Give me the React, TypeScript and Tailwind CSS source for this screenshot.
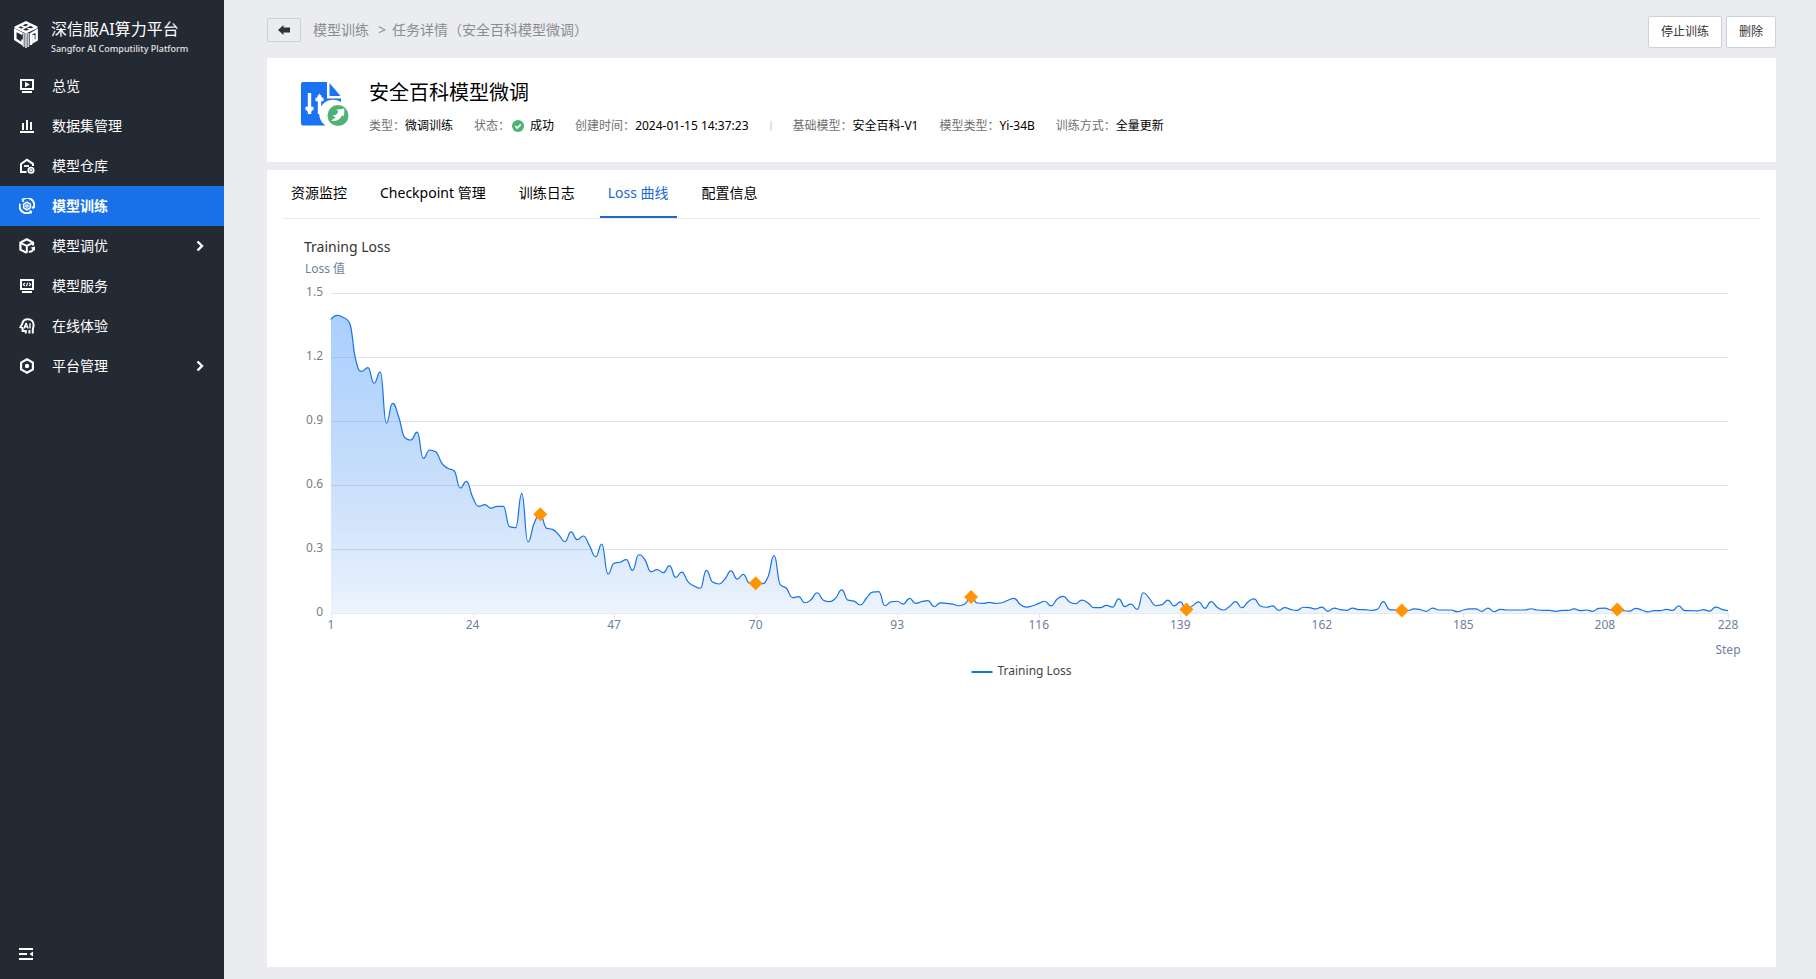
import { useLayoutEffect, useRef, useState, type ReactNode } from "react";

/* ---------- Sidebar icons (16 × 16 grid) ---------- */

function Icon({ children }: { children: ReactNode }) {
  return (
    <svg viewBox="0 0 16 16" className="h-4 w-4 shrink-0" fill="none" stroke="currentColor" strokeWidth="2" aria-hidden="true">
      {children}
    </svg>
  );
}

const OverviewIcon = () => (
  <Icon>
    <path d="M2 2h12v9H2z" />
    <path d="M6 3.8v5.4l4.8-2.7z" fill="currentColor" stroke="none" />
    <path d="M3 14h10" />
  </Icon>
);

const DatasetIcon = () => (
  <Icon>
    <path d="M1 14h14M4 5v7M8 2v10M12 4v8" />
  </Icon>
);

const WarehouseIcon = () => (
  <Icon>
    <path d="M7.5 14H2V6l6-4.2 6 4v2.2" />
    <path d="M5 8h5" strokeWidth="1.8" />
    <circle cx="12" cy="12.2" r="2.8" strokeWidth="1.5" />
    <path d="M12 10.2v4M10.2 11.2l3.6 2M13.8 11.2l-3.6 2" strokeWidth="1" />
  </Icon>
);

const TrainingIcon = () => (
  <Icon>
    <path d="M3.2 2.2A7 7 0 0 1 14.8 9.5M1 5.8A7 7 0 0 0 12 13.6" strokeWidth="2" />
    <path d="M12.2 8.4h3.8l-1.8 3.2zM10 12l3.2 1-.8 3.2z" fill="currentColor" stroke="none" />
    <path d="M8 4.2l3.3 1.9v3.8L8 11.800 4.700 9.900V6.100z" strokeWidth="1.6" />
    <circle cx="8" cy="8" r="1.2" strokeWidth="1.2" />
    <path d="M2.6 3.6l2.6.4-1-3z" fill="currentColor" stroke="none" />
  </Icon>
);

const TuningIcon = () => (
  <Icon>
    <path d="M14 7.5V4.600L7.800 1.300 1.400 4.600v7l6.300 3.300" strokeWidth="2.2" />
    <path d="M1.4 4.8l6.4 3 6-3M7.800 7.800v7" strokeWidth="2" />
    <path d="M9.8 13.8c2.6.2 4.4-1.2 4.8-3.4" strokeWidth="2" />
    <path d="M11.400 9.800l4.600-1.400-.2 4.400z" fill="currentColor" stroke="none" />
  </Icon>
);

const ServiceIcon = () => (
  <Icon>
    <path d="M2 2h12v9H2zM3 14h10" />
    <path d="M5.900 4.800L4.300 6.400l1.600 1.600M10.100 4.800l1.600 1.600-1.600 1.600M8.600 4.700l-1.200 3.500" strokeWidth="1.1" />
  </Icon>
);

const ExperienceIcon = () => (
  <Icon>
    <path d="M6.800 15.500V13H3.600v-2.800L1.400 9l1.800-3C3.600 3 5.800 1.200 8.800 1.200c3.400 0 5.800 2.400 5.800 5.800 0 2.400-.8 3-.8 5v3.500M10.400 15.500V12" strokeWidth="2" />
    <path d="M5 10.400l1.900-5h.4l1.900 5M5.700 8.800h2.900M11 5.200v5.200" strokeWidth="1.400" />
  </Icon>
);

const PlatformIcon = () => (
  <Icon>
    <path d="M8 1.300l5.900 3.300v6.800L8 14.700l-5.900-3.300V4.600z" strokeWidth="2.200" />
    <circle cx="8" cy="8" r="2.200" fill="currentColor" stroke="none" />
  </Icon>
);

const ChevronIcon = () => (
  <svg viewBox="0 0 8 12" className="h-3 w-2" fill="none" stroke="currentColor" strokeWidth="2.400" aria-hidden="true">
    <path d="M1.500 1.500L6 6l-4.500 4.500" />
  </svg>
);

function Logo() {
  return (
    <svg viewBox="0 0 24 27" className="h-[27px] w-6 shrink-0" fill="none" stroke="#fff" aria-hidden="true">
      <path d="M12 1.300L22.400 6.300 12 11.200 1.600 6.300z" strokeWidth="2.400" strokeLinejoin="round" />
      <path d="M7 4.500l4 1.800M13 6.500l4 1.800M8 7.900l7.600-3.600" strokeWidth="1.900" />
      <path d="M8.500 12.800L1.300 9.200v9.200l7.200 4.600v-4.500" strokeWidth="2.500" />
      <path d="M12 12v15M9.700 12v14M14.300 12v14" stroke="#c6c9cd" strokeWidth="1.900" />
      <path d="M17 24V13l5.700-3.300v9L19.500 20.600v-6.500" strokeWidth="2.400" />
    </svg>
  );
}

function TaskIcon() {
  return (
    <svg viewBox="0 0 48 44" className="h-11 w-12 shrink-0" aria-hidden="true">
      <path d="M2 0h24v16.500h14V20a13.800 13.800 0 0 0-15.500 23.500H2a2 2 0 0 1-2-2V2a2 2 0 0 1 2-2z" fill="#1a73f2" />
      <path d="M28.500 1L39.500 14H28.500z" fill="#1a73f2" />
      <g stroke="#fff" strokeWidth="3.4">
        <path d="M8.500 11v21M18.500 13v19" />
        <path d="M4.500 26.500h8M14.500 17.500h8" />
      </g>
      <path d="M4.500 26l4 6.500 4-6.500zM14.500 18l4-6.500 4 6.500z" fill="#fff" />
      <circle cx="37" cy="33.500" r="10.500" fill="#4fb173" />
      <path d="M30 38.500c5.500 1.500 9.500-1 10.800-5.200l2.200.9.400-7.700-8 1.300 1.900 1.800c-1 2.800-2.700 4-5.800 3.900l3 2.300z" fill="#fff" />
    </svg>
  );
}

/* ---------- Sidebar ---------- */

const NAV = [
  { label: "总览", icon: <OverviewIcon /> },
  { label: "数据集管理", icon: <DatasetIcon /> },
  { label: "模型仓库", icon: <WarehouseIcon /> },
  { label: "模型训练", icon: <TrainingIcon />, active: true },
  { label: "模型调优", icon: <TuningIcon />, expandable: true },
  { label: "模型服务", icon: <ServiceIcon /> },
  { label: "在线体验", icon: <ExperienceIcon /> },
  { label: "平台管理", icon: <PlatformIcon />, expandable: true },
];

function Sidebar() {
  return (
    <aside className="flex w-56 shrink-0 flex-col bg-[#242a34] text-white">
      <div className="flex h-[66px] items-start gap-[13px] pt-[17px] pl-[14px]">
        <div className="pt-1">
          <Logo />
        </div>
        <div>
          <div className="text-base leading-6 whitespace-nowrap">深信服AI算力平台</div>
          <div className="text-[9px] leading-4 font-medium whitespace-nowrap text-[#e3e4e6]">Sangfor AI Computility Platform</div>
        </div>
      </div>
      <nav>
        {NAV.map((item) => (
          <a
            key={item.label}
            href="#"
            aria-current={item.active ? "page" : undefined}
            className={`flex h-10 items-center pr-5 pl-[19px] text-sm ${item.active ? "bg-[#1871e8] font-bold" : ""}`}
          >
            {item.icon}
            <span className="ml-[17px] flex-1">{item.label}</span>
            {item.expandable && <ChevronIcon />}
          </a>
        ))}
      </nav>
      <button type="button" aria-label="收起菜单" className="mt-auto mb-4 ml-[18px] w-fit">
        <svg viewBox="0 0 16 16" className="h-4 w-4" fill="none" stroke="currentColor" strokeWidth="2" aria-hidden="true">
          <path d="M1 2h14M1 7h8M1 12h14" />
          <path d="M15 4.500v5L11.500 7z" fill="currentColor" stroke="none" />
        </svg>
      </button>
    </aside>
  );
}

/* ---------- Loss chart ---------- */

const LOSS = [
  1.378, 1.395, 1.385, 1.36, 1.19, 1.133, 1.15, 1.077, 1.13, 0.89, 0.983, 0.92, 0.823, 0.811, 0.848, 0.725, 0.764, 0.756,
  0.703, 0.678, 0.667, 0.586, 0.617, 0.544, 0.5, 0.508, 0.492, 0.5, 0.5, 0.405, 0.4, 0.56, 0.333, 0.42, 0.4625, 0.398,
  0.392, 0.367, 0.334, 0.38, 0.344, 0.361, 0.316, 0.264, 0.323, 0.183, 0.233, 0.238, 0.25, 0.2, 0.273, 0.25, 0.194, 0.203,
  0.189, 0.222, 0.167, 0.192, 0.147, 0.127, 0.116, 0.2, 0.145, 0.136, 0.159, 0.197, 0.159, 0.181, 0.14, 0.139, 0.138, 0.169,
  0.269, 0.133, 0.116, 0.072, 0.077, 0.048, 0.0625, 0.095, 0.06, 0.053, 0.07, 0.108, 0.06, 0.056, 0.0375, 0.069, 0.098, 0.1,
  0.034, 0.052, 0.055, 0.042, 0.069, 0.045, 0.053, 0.058, 0.03, 0.047, 0.045, 0.042, 0.034, 0.042, 0.075, 0.047, 0.045, 0.05,
  0.045, 0.048, 0.06, 0.069, 0.04, 0.028, 0.034, 0.045, 0.055, 0.033, 0.066, 0.078, 0.052, 0.044, 0.06, 0.047, 0.025, 0.025,
  0.036, 0.028, 0.066, 0.03, 0.042, 0.017, 0.095, 0.067, 0.034, 0.039, 0.06, 0.033, 0.052, 0.016, 0.034, 0.052, 0.022, 0.053,
  0.027, 0.014, 0.031, 0.053, 0.025, 0.052, 0.066, 0.033, 0.027, 0.033, 0.0125, 0.025, 0.016, 0.0125, 0.027, 0.025, 0.019,
  0.028, 0.008, 0.023, 0.016, 0.0125, 0.023, 0.016, 0.016, 0.0125, 0.017, 0.053, 0.016, 0.014, 0.012, 0.012, 0.019, 0.016,
  0.008, 0.023, 0.014, 0.014, 0.014, 0.006, 0.014, 0.019, 0.019, 0.008, 0.023, 0.006, 0.017, 0.014, 0.014, 0.014, 0.014,
  0.02, 0.014, 0.012, 0.012, 0.008, 0.012, 0.012, 0.019, 0.011, 0.014, 0.008, 0.022, 0.023, 0.014, 0.016, 0.011, 0.009,
  0.022, 0.014, 0.005, 0.011, 0.011, 0.017, 0.012, 0.033, 0.011, 0.011, 0.01, 0.016, 0.009, 0.028, 0.017, 0.011,
];
const CHECKPOINTS = [35, 70, 105, 140, 175, 210];
const X_TICKS = [1, 24, 47, 70, 93, 116, 139, 162, 185, 208, 228];
const Y_TICKS = [0, 0.3, 0.6, 0.9, 1.2, 1.5];
const PLOT = { left: 48, right: 32, top: 74, height: 320 };

type Point = { x: number; y: number };

/** Bézier curve through the points; handles stay inside the range of neighbouring values. */
function smoothPath(pts: Point[], smooth = 0.5): string {
  const clamp = (v: number, a: number, b: number) => Math.max(Math.min(a, b), Math.min(Math.max(a, b), v));
  let d = `M${pts[0].x} ${pts[0].y}`;
  let out: Point = pts[0];
  for (let i = 1; i < pts.length; i++) {
    const prev = pts[i - 1];
    const cur = pts[i];
    const next = pts[i + 1];
    let inn: Point = cur;
    let nextOut: Point = cur;
    if (next) {
      const slope = (next.y - prev.y) / (next.x - prev.x);
      const half = (next.x - cur.x) * smooth;
      let outY = clamp(cur.y + slope * half, cur.y, next.y);
      const inY = clamp(cur.y - (outY - cur.y), cur.y, prev.y);
      outY = cur.y - (inY - cur.y);
      inn = { x: cur.x - half, y: inY };
      nextOut = { x: cur.x + half, y: outY };
    }
    d += `C${out.x.toFixed(2)} ${out.y.toFixed(2)} ${inn.x.toFixed(2)} ${inn.y.toFixed(2)} ${cur.x.toFixed(2)} ${cur.y.toFixed(2)}`;
    out = nextOut;
  }
  return d;
}

function LossChart() {
  const box = useRef<HTMLDivElement>(null);
  const [width, setWidth] = useState(1200);

  useLayoutEffect(() => {
    const el = box.current;
    if (!el) return;
    const measure = () => setWidth(el.clientWidth);
    measure();
    const observer = new ResizeObserver(measure);
    observer.observe(el);
    return () => observer.disconnect();
  }, []);

  const right = width - PLOT.right;
  const bottom = PLOT.top + PLOT.height;
  const x = (step: number) => PLOT.left + ((step - 1) / (LOSS.length - 1)) * (right - PLOT.left);
  const y = (loss: number) => bottom - (loss / 1.5) * PLOT.height;
  const line = smoothPath(LOSS.map((v, i) => ({ x: x(i + 1), y: y(v) })));
  const crisp = (v: number) => Math.round(v) + 0.5;

  return (
    <div ref={box} className="w-full overflow-hidden">
      <svg width={width} height={480} className="block text-xs" role="img" aria-label="Training Loss">
        <defs>
          <linearGradient id="loss-fill" gradientUnits="userSpaceOnUse" x1="0" y1={y(1.4)} x2="0" y2={bottom}>
            <stop offset="0" stopColor="#57a2ff" stopOpacity="0.5" />
            <stop offset="1" stopColor="#1871e8" stopOpacity="0.08" />
          </linearGradient>
        </defs>
        <text x="21" y="33" className="fill-[#333] text-sm">Training Loss</text>
        <text x="42" y="54" textAnchor="middle" className="fill-[#6e7f9f]">Loss 值</text>
        {Y_TICKS.map((t) => (
          <g key={t}>
            <line x1={PLOT.left} x2={right} y1={crisp(y(t))} y2={crisp(y(t))} stroke={t === 0 ? "#e8eaee" : "#e0e3ec"} />
            <text x={PLOT.left - 8} y={y(t) + 3} textAnchor="end" className="fill-[#7a7d84]">{t}</text>
          </g>
        ))}
        {X_TICKS.map((t) => (
          <g key={t}>
            <line x1={crisp(x(t))} x2={crisp(x(t))} y1={bottom} y2={bottom + 5} stroke="#e4e6ea" />
            <text x={x(t)} y={bottom + 16} textAnchor="middle" className="fill-[#6e7f9f]">{t}</text>
          </g>
        ))}
        <path d={`${line}L${right} ${bottom}L${PLOT.left} ${bottom}Z`} fill="url(#loss-fill)" />
        <path d={line} fill="none" stroke="#1871e8" strokeWidth="1.2" />
        {CHECKPOINTS.map((c) => (
          <path key={c} d={`M${x(c)} ${y(LOSS[c - 1]) - 7}l7 7l-7 7l-7 -7z`} fill="#ff9502" />
        ))}
        <text x={right} y="435" textAnchor="middle" className="fill-[#6e7f9f]">Step</text>
        <line x1={width / 2 - 50} x2={width / 2 - 29} y1="453" y2="453" stroke="#1871e8" strokeWidth="2" />
        <text x={width / 2 - 24} y="456" className="fill-[#444]">Training Loss</text>
      </svg>
    </div>
  );
}

/* ---------- Page ---------- */

function Meta({ label, children }: { label: string; children: ReactNode }) {
  return (
    <div className="flex items-center">
      <dt className="text-[#707070]">{label}：</dt>
      <dd className="flex items-center text-black">{children}</dd>
    </div>
  );
}

const TABS = ["资源监控", "Checkpoint 管理", "训练日志", "Loss 曲线", "配置信息"];

export default function App() {
  return (
    <div className="flex min-h-screen bg-[#ebecf0] font-['Noto_Sans','Noto_Sans_CJK_SC',sans-serif]">
      <Sidebar />
      <main className="flex min-w-0 flex-1 flex-col pr-10 pb-3 pl-[43px]">
        <header className="flex h-[58px] items-start justify-between">
          <div className="flex items-center gap-3 pt-[18px] text-sm leading-6 text-[#8a8c90]">
            <button type="button" aria-label="返回" className="flex h-6 w-[34px] items-center justify-center rounded-xs border border-[#cdd0d9]">
              <svg viewBox="0 0 12 10" className="h-[10px] w-3" fill="#333" aria-hidden="true">
                <path d="M5.500 0v2.500H12v5H5.500V10L0 5z" />
              </svg>
            </button>
            <nav className="flex h-6 items-center">
              <a href="#">模型训练</a>
              <span className="mr-[6px] ml-[9px]">&gt;</span>
              <span>任务详情（安全百科模型微调）</span>
            </nav>
          </div>
          <div className="flex gap-1 pt-4 text-xs text-[#333]">
            <button type="button" className="h-8 rounded-xs border border-[#cdd0d9] bg-white px-3">停止训练</button>
            <button type="button" className="h-8 rounded-xs border border-[#cdd0d9] bg-white px-3">删除</button>
          </div>
        </header>

        <section className="flex h-[104px] items-start gap-5 bg-white pt-6 pl-[34px]">
          <TaskIcon />
          <div>
            <h1 className="text-xl leading-[22px] text-black">安全百科模型微调</h1>
            <dl className="mt-3 flex items-center gap-[21px] text-xs leading-5 whitespace-nowrap">
              <Meta label="类型">微调训练</Meta>
              <Meta label="状态">
                <svg viewBox="0 0 12 12" className="mr-[6px] ml-[2px] h-3 w-3" aria-hidden="true">
                  <circle cx="6" cy="6" r="6" fill="#4fb173" />
                  <path d="M3.300 6l2 2 3.500-3.600" fill="none" stroke="#fff" strokeWidth="1.600" />
                </svg>
                成功
              </Meta>
              <Meta label="创建时间">2024-01-15 14:37:23</Meta>
              <div className="h-[10px] w-[2px] bg-[#e2e3e6]" />
              <Meta label="基础模型">安全百科-V1</Meta>
              <Meta label="模型类型">Yi-34B</Meta>
              <Meta label="训练方式">全量更新</Meta>
            </dl>
          </div>
        </section>

        <section className="mt-2 flex-1 bg-white px-4">
          <div role="tablist" className="flex h-[49px] gap-[17px] border-b border-[#e9eaec] text-sm leading-[46px]">
            {TABS.map((tab) => {
              const active = tab === "Loss 曲线";
              return (
                <button
                  key={tab}
                  type="button"
                  role="tab"
                  aria-selected={active}
                  className={`h-12 border-b-2 px-2 ${active ? "border-[#1b68d5] text-[#1b68d5]" : "border-transparent text-black"}`}
                >
                  {tab}
                </button>
              );
            })}
          </div>
          <LossChart />
        </section>
      </main>
    </div>
  );
}
